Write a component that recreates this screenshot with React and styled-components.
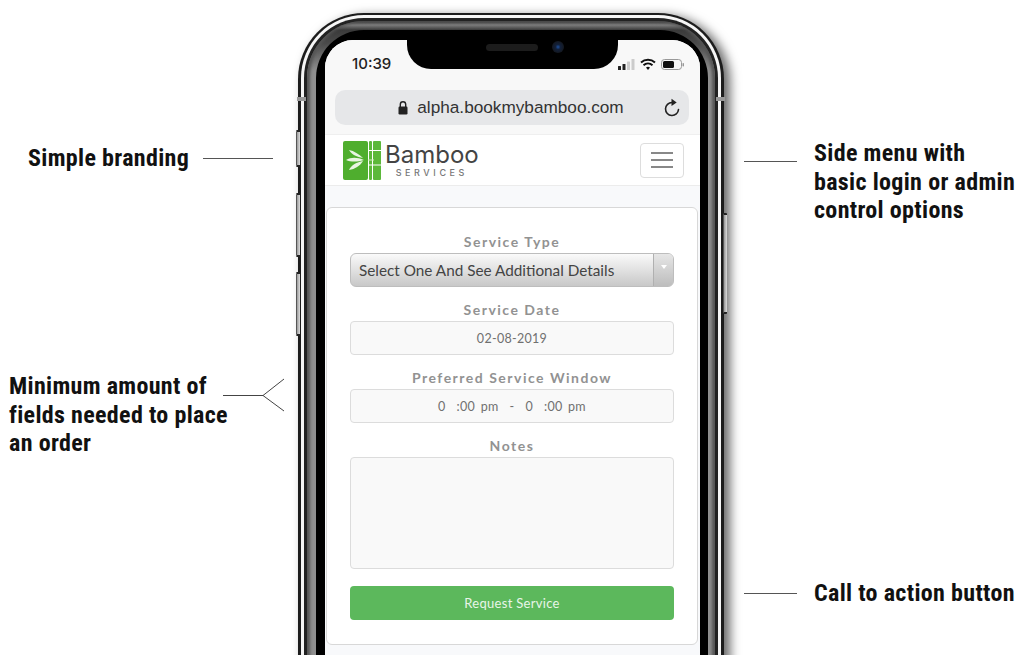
import React from "react";
import styled, { createGlobalStyle } from "styled-components";

const Global = createGlobalStyle`
  html, body { margin: 0; padding: 0; background: #fff; }
  #root { width: 1024px; height: 655px; }
`;

const Stage = styled.div`
  position: relative;
  width: 1024px;
  height: 655px;
  overflow: hidden;
  background: #fff;
`;

const Callout = styled.div`
  position: absolute;
  left: ${(p) => p.$x}px;
  top: ${(p) => p.$y}px;
  font: 700 24px/28.5px Roboto, "Liberation Sans", sans-serif;
  font-stretch: 84%;
  letter-spacing: 0.33px;
  color: #111;
  white-space: nowrap;
`;

const Leader = styled.div`
  position: absolute;
  left: ${(p) => p.$x}px;
  top: ${(p) => p.$y}px;
  width: ${(p) => p.$w}px;
  height: 1px;
  background: #555;
`;

const ForkSvg = styled.svg`
  position: absolute;
  left: 222px;
  top: 377px;
`;

const Phone = styled.div`
  position: relative;
  width: 426px;
  height: 760px;
  margin: 13px 0 0 298px;
  box-sizing: border-box;
  padding: 2px 3px 0;
  background: #1c1c1c;
  border-radius: 66px;
  box-shadow: 6px 3px 11px rgba(0, 0, 0, 0.6);
`;

const SteelRing = styled.div`
  box-sizing: border-box;
  height: 100%;
  padding: 3px 3px 0;
  background: #f6f6f6;
  border-radius: 63px;
`;

const DarkRing = styled.div`
  box-sizing: border-box;
  height: 100%;
  padding: 3px 3px 0;
  background: #222;
  border-radius: 60px;
`;

const GreyRing = styled.div`
  box-sizing: border-box;
  height: 100%;
  padding: 9px 7px 0 9px;
  border-radius: 57px;
  background: linear-gradient(180deg, #333 0, #7c7c7c 4px, #3a3a3a 9px, #4a4a4a 22px, #8f8f8f 50px, #8f8f8f 100%);
  box-shadow: inset 3px 0 3px #555, inset -3px 0 3px #555;
`;

const BlackRing = styled.div`
  box-sizing: border-box;
  height: 100%;
  padding: 10px 8px 0 9px;
  background: #000;
  border-radius: 48px;
`;

const Screen = styled.div`
  position: relative;
  display: flex;
  flex-direction: column;
  height: 100%;
  overflow: hidden;
  background: #f8f9fb;
  border-radius: 28px 28px 0 0;
`;

const Notch = styled.div`
  position: absolute;
  left: 82px;
  top: 0;
  width: 211px;
  height: 29px;
  background: #000;
  border-radius: 0 0 24px 24px;
`;

const Speaker = styled.div`
  position: absolute;
  left: 79px;
  top: 4px;
  width: 52px;
  height: 7px;
  background: #1c1c1c;
  border-radius: 4px;
`;

const Camera = styled.div`
  position: absolute;
  left: 145px;
  top: 1px;
  width: 12px;
  height: 12px;
  border-radius: 50%;
  background: radial-gradient(circle, #1d4f9c 0, #12203a 30%, #141820 70%);
`;

const Chrome = styled.div`
  box-sizing: border-box;
  height: 95px;
  padding: 50px 11px 0 10px;
  background: #f8f8f8;
  border-bottom: 1px solid #efefef;
`;

const Clock = styled.div`
  position: absolute;
  left: 27px;
  top: 15px;
  font: 500 15px/18px Inter, "Liberation Sans", sans-serif;
  color: #222;
`;

const StatusIcons = styled.svg`
  position: absolute;
  left: 292px;
  top: 17px;
`;

const UrlBar = styled.div`
  position: relative;
  display: flex;
  align-items: center;
  justify-content: center;
  gap: 9px;
  height: 35px;
  padding-right: 2px;
  background: #e6e7e9;
  border-radius: 10px;
`;

const UrlText = styled.span`
  font: 400 17.2px/35px "Liberation Sans", Arial, sans-serif;
  color: #333;
`;

const Reload = styled.svg`
  position: absolute;
  right: 8px;
  top: 8px;
`;

const Header = styled.header`
  display: flex;
  align-items: center;
  justify-content: space-between;
  box-sizing: border-box;
  height: 51px;
  padding: 0 16px 0 18px;
  background: #fff;
  border-bottom: 1px solid #ececec;
`;

const Brand = styled.div`
  display: flex;
  align-items: center;
  gap: 3px;
`;

const Wordmark = styled.div`
  display: flex;
  flex-direction: column;
  align-items: center;
  margin-top: -1px;
`;

const BrandName = styled.span`
  font: 400 24px/27px Inter, "Liberation Sans", sans-serif;
  color: #444;
`;

const BrandSub = styled.span`
  font: 500 9px/10px Inter, "Liberation Sans", sans-serif;
  letter-spacing: 3.6px;
  color: #777;
`;

const Burger = styled.button`
  display: flex;
  flex-direction: column;
  justify-content: center;
  gap: 5px;
  box-sizing: border-box;
  width: 44px;
  height: 35px;
  padding: 0 10px;
  background: #fff;
  border: 1px solid #ddd;
  border-radius: 4px;
`;

const BurgerBar = styled.span`
  display: block;
  height: 2px;
  background: #888;
`;

const Content = styled.main`
  flex: 1;
  padding: 21px 2px 0 1px;
  background: #f8f9fb;
`;

const Card = styled.section`
  box-sizing: border-box;
  height: 438px;
  padding: 24px 23px 0;
  background: #fff;
  border: 1px solid #d8d8d8;
  border-radius: 6px;
`;

const Field = styled.div`
  display: flex;
  flex-direction: column;
  margin-bottom: 13px;
`;

const Label = styled.label`
  height: 21px;
  text-align: center;
  font: 700 14px/19px Lato, "Open Sans", sans-serif;
  letter-spacing: 1.5px;
  color: #929292;
`;

const SelectBox = styled.div`
  display: flex;
  box-sizing: border-box;
  height: 34px;
  background: linear-gradient(180deg, #fafafa 0, #c8c8c8 100%);
  border: 1px solid #bdbdbd;
  border-radius: 6px;
  overflow: hidden;
`;

const SelectText = styled.span`
  flex: 1;
  padding-left: 8px;
  font: 400 15.3px/33px Lato, "Open Sans", sans-serif;
  color: #444;
  white-space: nowrap;
`;

const SelectArrow = styled.span`
  display: flex;
  align-items: flex-start;
  justify-content: center;
  width: 20px;
  padding-top: 11px;
  box-sizing: border-box;
  background: linear-gradient(180deg, #e6e6e6 0, #bdbdbd 100%);
  border-left: 1px solid #b0b0b0;

  &::before {
    content: "";
    border: 3px solid transparent;
    border-top: 4px solid #fff;
  }
`;

const InputBox = styled.div`
  box-sizing: border-box;
  height: 34px;
  text-align: center;
  white-space: pre;
  font: 400 12.5px/34px Lato, "Open Sans", sans-serif;
  letter-spacing: 0.3px;
  word-spacing: 2px;
  color: #707070;
  background: #f9f9f9;
  border: 1px solid #dcdcdc;
  border-radius: 4px;
`;

const TextArea = styled.div`
  box-sizing: border-box;
  height: 112px;
  background: #f9f9f9;
  border: 1px solid #dcdcdc;
  border-radius: 4px;
`;

const Submit = styled.button`
  display: block;
  width: 100%;
  height: 34px;
  margin-top: 17px;
  padding: 0;
  font: 400 13px/32px Lato, "Open Sans", sans-serif;
  letter-spacing: 0.3px;
  color: #e8f5e8;
  background: #5cb85c;
  border: none;
  border-radius: 4px;
`;

const SideButton = styled.div`
  position: absolute;
  left: ${(p) => p.$x}px;
  top: ${(p) => p.$y}px;
  width: 3px;
  height: ${(p) => p.$h}px;
  background: linear-gradient(90deg, #999, #ddd);
  border-top: 2px solid #222;
  border-bottom: 2px solid #222;
  border-left: 1px solid #555;
  border-radius: 1px;
`;

const AntennaMark = styled.div`
  position: absolute;
  left: ${(p) => p.$x}px;
  top: 84px;
  width: 9px;
  height: 4px;
  background: #999;
`;

function Logo() {
  return (
    <svg width="39" height="39" viewBox="0 0 39 39" aria-hidden="true">
      <rect x="0" y="0" width="25" height="39" rx="2" fill="#4fae2e" />
      <rect x="26" y="0" width="3" height="39" rx="1" fill="#5cb83a" />
      <rect x="30" y="0" width="8" height="39" rx="1" fill="#5cb83a" />
      <path d="M26 9.5h12M26 24h12" stroke="#fff" strokeWidth="1" />
      <path d="M25 19h6" stroke="#cfeabc" strokeWidth="1" />
      <g fill="#e9f5e2">
        <path d="M3 19c5-3 11-3 18 0-7 2-13 2-18 0z" />
        <path d="M6 9c5 1 10 4 14 8-6-1-11-3-14-8z" />
        <path d="M6 29c2-5 8-8 14-9-3 5-8 8-14 9z" />
      </g>
    </svg>
  );
}

export default function App() {
  return (
    <Stage>
      <Global />
      <Phone>
        <SteelRing>
          <DarkRing>
            <GreyRing>
              <BlackRing>
                <Screen>
                  <Chrome>
                    <Clock>10:39</Clock>
                    <StatusIcons width="68" height="16" viewBox="0 0 68 16" aria-hidden="true">
                      <rect x="1" y="9" width="3" height="4" rx="0.5" fill="#222" />
                      <rect x="5.5" y="7" width="3" height="6" rx="0.5" fill="#222" />
                      <rect x="10" y="4.5" width="3" height="8.5" rx="0.5" fill="#ccc" />
                      <rect x="14.5" y="2" width="3" height="11" rx="0.5" fill="#ccc" />
                      <path d="M24 5.5c4-3.6 10-3.6 14 0M26.5 8.3c2.6-2.4 6.4-2.4 9 0" fill="none" stroke="#111" strokeWidth="2" />
                      <path d="M29 10.6c1.3-1.1 2.7-1.1 4 0L31 13z" fill="#111" />
                      <rect x="44.5" y="2.5" width="20" height="10" rx="3" fill="none" stroke="#999" />
                      <rect x="46" y="4" width="11" height="7" rx="1.5" fill="#111" />
                      <rect x="65.5" y="6" width="1.5" height="3.5" rx="0.7" fill="#999" />
                    </StatusIcons>
                    <UrlBar>
                      <svg width="10" height="15" viewBox="0 0 10 15" aria-hidden="true">
                        <path d="M2.3 7V4.5a2.7 2.7 0 0 1 5.4 0V7" fill="none" stroke="#222" strokeWidth="1.4" />
                        <rect x="0.5" y="6.5" width="9" height="8" rx="1.2" fill="#222" />
                      </svg>
                      <UrlText>alpha.bookmybamboo.com</UrlText>
                      <Reload width="18" height="19" viewBox="0 0 18 19" aria-hidden="true">
                        <path d="M9 4.5a6.5 6.5 0 1 0 6.5 7" fill="none" stroke="#222" strokeWidth="1.6" strokeLinecap="round" />
                        <path d="M8.5 0.8l5.2 3.6-5.2 3.6z" fill="#222" />
                      </Reload>
                    </UrlBar>
                  </Chrome>
                  <Header>
                    <Brand>
                      <Logo />
                      <Wordmark>
                        <BrandName>Bamboo</BrandName>
                        <BrandSub>SERVICES</BrandSub>
                      </Wordmark>
                    </Brand>
                    <Burger aria-label="Menu">
                      <BurgerBar />
                      <BurgerBar />
                      <BurgerBar />
                    </Burger>
                  </Header>
                  <Content>
                    <Card>
                      <Field>
                        <Label>Service Type</Label>
                        <SelectBox>
                          <SelectText>Select One And See Additional Details</SelectText>
                          <SelectArrow />
                        </SelectBox>
                      </Field>
                      <Field>
                        <Label>Service Date</Label>
                        <InputBox>02-08-2019</InputBox>
                      </Field>
                      <Field>
                        <Label>Preferred Service Window</Label>
                        <InputBox>{"0  :00 pm  -  0  :00 pm"}</InputBox>
                      </Field>
                      <Field>
                        <Label>Notes</Label>
                        <TextArea />
                      </Field>
                      <Submit>Request Service</Submit>
                    </Card>
                  </Content>
                  <Notch>
                    <Speaker />
                    <Camera />
                  </Notch>
                </Screen>
              </BlackRing>
            </GreyRing>
          </DarkRing>
        </SteelRing>
        <SideButton $x={-2} $y={117} $h={33} />
        <SideButton $x={-2} $y={180} $h={60} />
        <SideButton $x={-2} $y={259} $h={60} />
        <SideButton $x={425} $y={200} $h={97} />
        <AntennaMark $x={-1} />
        <AntennaMark $x={418} />
      </Phone>

      <Callout $x={28} $y={144}>Simple branding</Callout>
      <Leader $x={203} $y={158} $w={70} />

      <Callout $x={9} $y={372}>Minimum amount of<br />fields needed to place<br />an order</Callout>
      <ForkSvg width="64" height="36" viewBox="0 0 64 36" aria-hidden="true">
        <path d="M1 18.5H41M62 2L41 18.5 62 34" fill="none" stroke="#444" strokeWidth="1" />
      </ForkSvg>

      <Callout $x={814} $y={139}>Side menu with<br />basic login or admin<br />control options</Callout>
      <Leader $x={744} $y={161} $w={53} />

      <Callout $x={814} $y={579}>Call to action button</Callout>
      <Leader $x={744} $y={593} $w={53} />
    </Stage>
  );
}
